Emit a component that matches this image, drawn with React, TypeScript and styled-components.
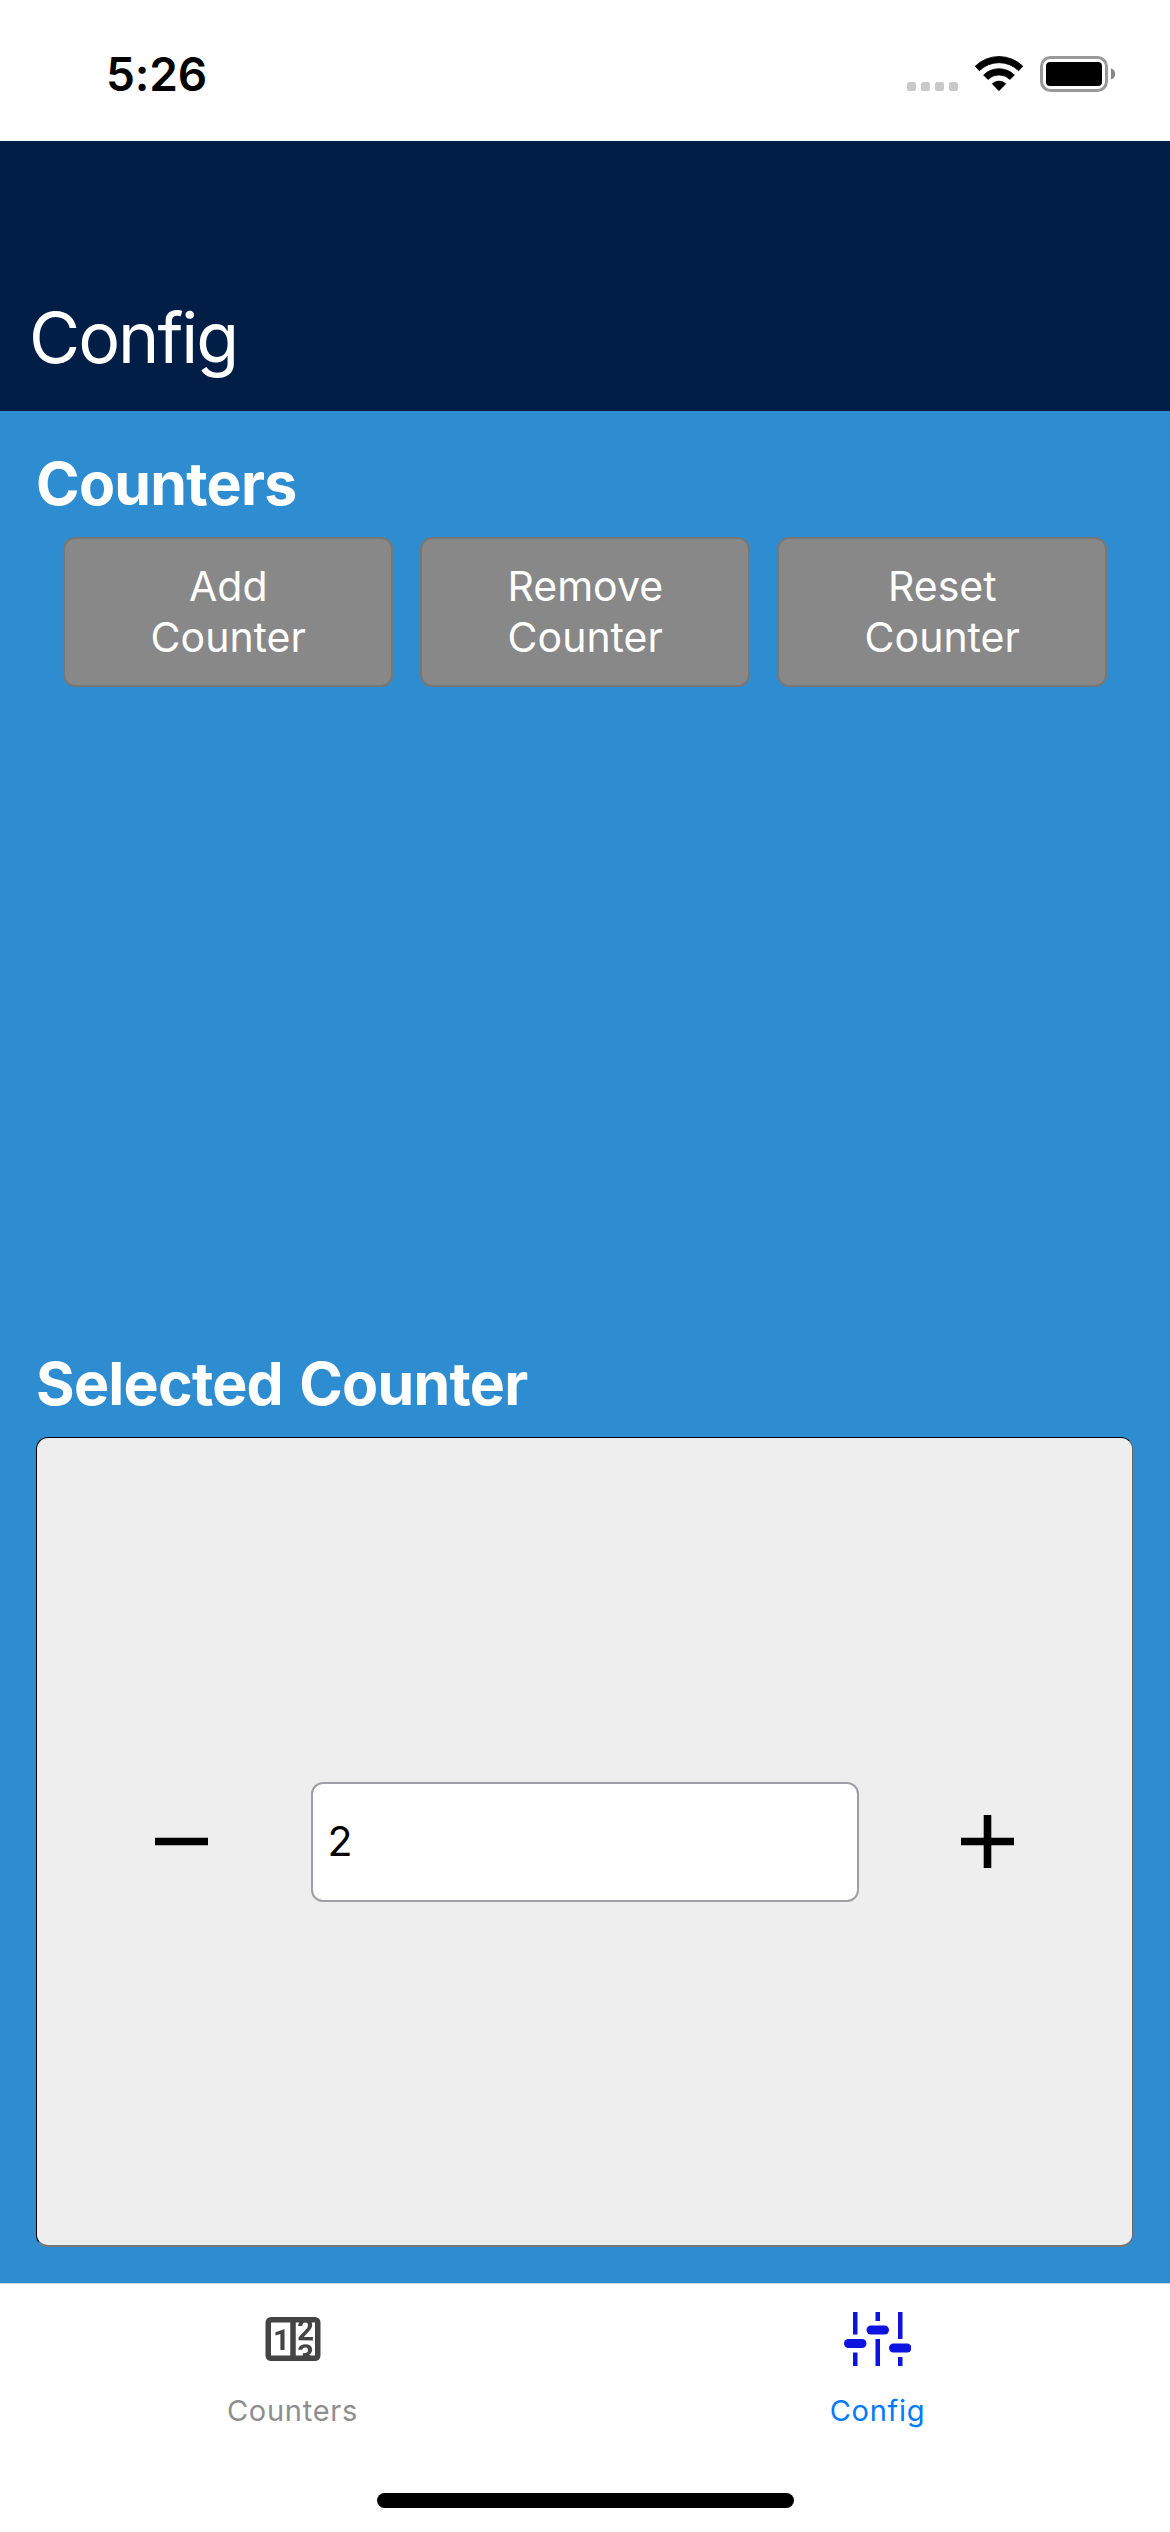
import React, { useState } from "react";
import styled, { createGlobalStyle } from "styled-components";

const GlobalStyle = createGlobalStyle`
  * { box-sizing: border-box; }
  body { margin: 0; background: #fff; }
`;

const Screen = styled.div`
  display: flex;
  flex-direction: column;
  width: 1170px;
  height: 2532px;
  overflow: hidden;
  font-family: Inter, "Liberation Sans", sans-serif;
  background: #fff;
`;

const StatusBar = styled.div`
  display: flex;
  align-items: flex-start;
  justify-content: space-between;
  height: 141px;
  padding: 45px 55px 0 106px;
`;

const Clock = styled.span`
  font-size: 46px;
  line-height: 58px;
  font-weight: 560;
  letter-spacing: -0.2px;
  color: #000;
`;

const StatusIcons = styled.svg`
  display: block;
  width: 210px;
  height: 48px;
  margin-top: 1px;
`;

const Header = styled.header`
  display: flex;
  align-items: flex-end;
  height: 270px;
  padding: 0 29px 30px;
  background: #001e46;
`;

const Title = styled.h1`
  margin: 0;
  font-size: 70px;
  line-height: 86px;
  font-weight: 400;
  letter-spacing: -2px;
  color: #fff;
`;

const Content = styled.main`
  display: flex;
  flex-direction: column;
  height: 1872px;
  padding: 36px 37px 36px 36px;
  background: #2e8dd1;
`;

const Section = styled.section<{ $height: number }>`
  display: flex;
  flex-direction: column;
  height: ${(p) => p.$height}px;
`;

const SectionTitle = styled.h2`
  flex: none;
  margin: 0;
  height: 90px;
  font-size: 59px;
  line-height: 74px;
  font-weight: 700;
  letter-spacing: -0.75px;
  word-spacing: 3px;
  color: #fff;
`;

const ButtonRow = styled.div`
  display: grid;
  grid-template-columns: repeat(3, 330px);
  padding-left: 27.3px;
  gap: 27px;
`;

const ActionButton = styled.button`
  height: 150px;
  padding: 0 60px;
  border: 2px solid #777;
  border-radius: 12px;
  background: #888;
  color: #fff;
  font: 400 41px/51px Inter, "Liberation Sans", sans-serif;
  letter-spacing: 0;
`;

const Card = styled.div`
  display: flex;
  flex: 1;
  align-items: center;
  border: 1px solid #000;
  border-right-color: #666;
  border-bottom: 2px solid #777;
  border-radius: 12px;
  background: #eee;
`;

const StepButton = styled.button<{ $side: "left" | "right" }>`
  display: flex;
  flex: 1;
  justify-content: center;
  padding: 0;
  padding-${(p) => p.$side}: 16px;
  border: 0;
  background: none;
`;

const StepIcon = styled.svg`
  display: block;
  width: 53px;
  height: 53px;
`;

const ValueInput = styled.input`
  width: 548px;
  height: 120px;
  padding: 0 15px 2px;
  border: 2px solid #9e9ea5;
  border-radius: 12px;
  background: #fff;
  color: #000;
  font: 400 41px/51px Inter, "Liberation Sans", sans-serif;
  outline: none;
`;

const TabBar = styled.nav`
  display: grid;
  grid-template-columns: 1fr 1fr;
  height: 147px;
  border-top: 1px solid #d8d8d8;
  background: #fff;
`;

const Tab = styled.a<{ $active?: boolean }>`
  display: flex;
  flex-direction: column;
  align-items: center;
  padding-top: 21px;
  color: ${(p) => (p.$active ? "#007aff" : "#8e8e8f")};
  font-size: 29px;
  line-height: 38px;
  letter-spacing: 0.75px;
`;

const TabIcon = styled.span`
  display: flex;
  align-items: center;
  justify-content: center;
  height: 68px;
  margin-bottom: 19px;
`;

const HomeArea = styled.div`
  display: flex;
  justify-content: center;
  padding-top: 63px;
`;

const HomeIndicator = styled.div`
  width: 417px;
  height: 15px;
  border-radius: 8px;
  background: #000;
`;

const CounterIcon = () => (
  <svg width="66" height="66" viewBox="0 0 24 24" fill="#444">
    <path d="M4,4H20A2,2 0 0,1 22,6V18A2,2 0 0,1 20,20H4A2,2 0 0,1 2,18V6A2,2 0 0,1 4,4M4,6V18H11V6H4M20,18V6H18.76C19,6.54 18.95,7.07 18.95,7.13C18.88,7.8 18.41,8.5 18.24,8.75L15.91,11.3L19.23,11.28L19.24,12.5L14.04,12.47L14,11.47C14,11.47 17.05,8.24 17.2,7.95C17.34,7.67 17.91,6 16.5,6C15.27,6.05 15.41,7.3 15.41,7.3L13.87,7.31C13.87,7.31 13.88,6.65 14.25,6H13V18H15.58L15.57,17.14L16.54,17.13C16.54,17.13 17.45,16.97 17.46,16.08C17.5,15.08 16.65,15.08 16.5,15.08C16.37,15.08 15.43,15.13 15.43,15.95H13.91C13.91,15.95 13.95,13.89 16.5,13.89C19.1,13.89 18.96,15.91 18.96,15.91C18.96,15.91 19,17.16 17.85,17.63L18.37,18H20M8.92,16H7.42V10.2L5.62,10.76V9.53L8.76,8.41H8.92V16Z" />
  </svg>
);

const SlidersIcon = () => (
  <svg width="67.5" height="54" viewBox="0 0 15 12" fill="#0f13e0">
    <path d="M2 0h1v5H2zM2 9h1v3H2zM7 0h1v2H7zM7 6h1v6H7zM12 0h1v6h-1zM12 10h1v2h-1z" />
    <rect x="0" y="6" width="5" height="2" rx="1" />
    <rect x="5" y="3" width="5" height="2" rx="1" />
    <rect x="10" y="7" width="5" height="2" rx="1" />
  </svg>
);

const ACTIONS = ["Add Counter", "Remove Counter", "Reset Counter"];

export default function App() {
  const [value, setValue] = useState("2");
  const step = (by: number) => setValue(String(Number(value) + by));

  return (
    <Screen>
      <GlobalStyle />
      <StatusBar>
        <Clock>5:26</Clock>
        <StatusIcons viewBox="905 46 210 48">
          <g fill="#c9c9c9">
            <rect x="907" y="82" width="9" height="9" rx="2.6" />
            <rect x="921" y="82" width="9" height="9" rx="2.6" />
            <rect x="935" y="82" width="9" height="9" rx="2.6" />
            <rect x="949" y="82" width="9" height="9" rx="2.6" />
          </g>
          <path d="M975.2 66.2a34 34 0 0 1 47.6 0l-4.2 4.5a28 28 0 0 0-39.2 0z" stroke="#000" strokeWidth="0.8" strokeLinejoin="round" />
          <path d="M983.6 75a22 22 0 0 1 30.8 0l-4.4 4.4a15.8 15.8 0 0 0-22 0z" stroke="#000" strokeWidth="0.8" strokeLinejoin="round" />
          <path d="M992.3 83.7a10 10 0 0 1 13.4 0l-6.7 7z" stroke="#000" strokeWidth="0.8" strokeLinejoin="round" />
          <rect x="1041.5" y="57.5" width="65" height="33" rx="9" fill="none" stroke="#999" strokeWidth="3" />
          <rect x="1046" y="62" width="56" height="24" rx="4" />
          <path d="M1111 68.2a6 6 0 0 1 0 11.4z" fill="#888" />
        </StatusIcons>
      </StatusBar>
      <Header>
        <Title>Config</Title>
      </Header>
      <Content>
        <Section $height={900}>
          <SectionTitle>Counters</SectionTitle>
          <ButtonRow>
            {ACTIONS.map((label) => (
              <ActionButton key={label}>{label}</ActionButton>
            ))}
          </ButtonRow>
        </Section>
        <Section $height={900}>
          <SectionTitle>Selected Counter</SectionTitle>
          <Card>
            <StepButton $side="left" aria-label="Decrease" onClick={() => step(-1)}>
              <StepIcon viewBox="0 0 53 53">
                <path d="M0 22.7h53v7.6H0z" />
              </StepIcon>
            </StepButton>
            <ValueInput value={value} onChange={(e) => setValue(e.target.value)} />
            <StepButton $side="right" aria-label="Increase" onClick={() => step(1)}>
              <StepIcon viewBox="0 0 53 53">
                <path d="M0 22.7h22.7V0h7.6v22.7H53v7.6H30.3V53h-7.6V30.3H0z" />
              </StepIcon>
            </StepButton>
          </Card>
        </Section>
      </Content>
      <TabBar>
        <Tab>
          <TabIcon>
            <CounterIcon />
          </TabIcon>
          Counters
        </Tab>
        <Tab $active>
          <TabIcon>
            <SlidersIcon />
          </TabIcon>
          Config
        </Tab>
      </TabBar>
      <HomeArea>
        <HomeIndicator />
      </HomeArea>
    </Screen>
  );
}
